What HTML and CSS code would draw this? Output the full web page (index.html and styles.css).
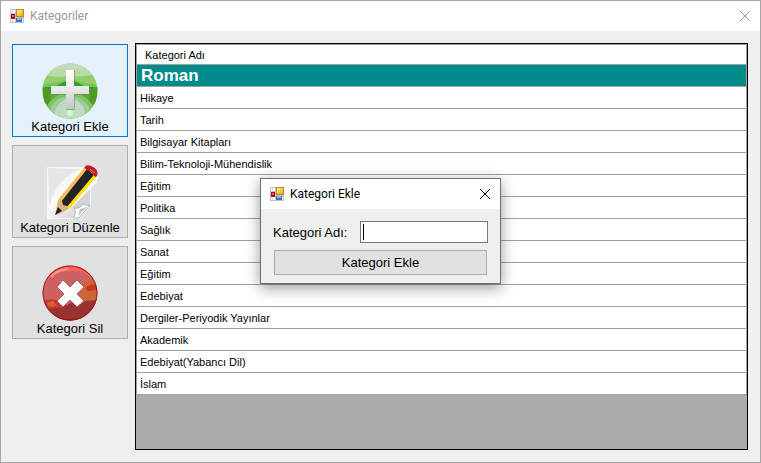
FILE: index.html
```html
<!DOCTYPE html>
<html lang="tr">
<head>
<meta charset="utf-8">
<title>Kategoriler</title>
<link rel="stylesheet" href="styles.css">
</head>
<body>
<svg class="defs" aria-hidden="true">
  <defs>
    <linearGradient id="gold" x1="0" y1="0" x2="1" y2="1"><stop offset="0" stop-color="#fff0a0"/><stop offset="1" stop-color="#f0a800"/></linearGradient>
    <linearGradient id="metal" x1="0" y1="0" x2="0" y2="1"><stop offset="0" stop-color="#ffffff"/><stop offset=".5" stop-color="#e8e8e8"/><stop offset="1" stop-color="#c4c4c4"/></linearGradient>
    <linearGradient id="paper" x1="0" y1="0" x2="1" y2="1"><stop offset="0" stop-color="#e4e4e4"/><stop offset=".4" stop-color="#fafafa"/><stop offset=".75" stop-color="#dcdcdc"/><stop offset="1" stop-color="#fff"/></linearGradient>
    <clipPath id="disc"><circle cx="28" cy="28" r="27.5"/></clipPath>
    <symbol id="form-icon" viewBox="0 0 14 14">
      <rect width="14" height="14" fill="#c3c3c3"/>
      <path d="M1 1h4v3H1zM1 10h4v3H1zM12 10h1v3h-1z" fill="#fff"/>
      <path d="M2 1h1v3H2zM2 11h1v2H2z" fill="#d8d8d8"/>
      <rect x="6" y="0" width="8" height="8" fill="#b98a1c"/>
      <rect x="7" y="1" width="6" height="6" fill="url(#gold)"/>
      <rect x="1" y="5" width="4" height="5" fill="#a01414"/>
      <rect x="2" y="6" width="2" height="2" fill="#e06050"/>
      <rect x="6" y="9" width="6" height="4" fill="#3a6fc8"/>
      <rect x="7" y="9" width="4" height="2" fill="#84b4f4"/>
    </symbol>
  </defs>
</svg>
<div class="window">
  <header class="titlebar inactive">
    <svg class="form-icon" aria-hidden="true"><use href="#form-icon"/></svg>
    <h1 class="caption">Kategoriler</h1>
    <button class="close" type="button" aria-label="Kapat"><svg viewBox="0 0 10 10" aria-hidden="true"><path d="M0 0l10 10M10 0L0 10"/></svg></button>
  </header>
  <main class="content">
    <nav class="tools">
      <button class="tool focused" type="button">
        <svg viewBox="0 0 56 56" aria-hidden="true">
          <g clip-path="url(#disc)">
            <rect width="56" height="56" fill="#8ccc62"/>
            <path d="M0 0h56v11H0z" fill="#bfdcc0"/>
            <path d="M0 6h56v2H0z" fill="#d6cfa0"/>
            <path d="M0 8h56v3q-28 6-56 1z" fill="#b4dca8"/>
            <path d="M0 12q14 5 24 1v7L0 22zM56 12q-14 5-24 1v7l24 2z" fill="#99cc66"/>
            <path d="M0 22q12-1 24-5h8q12 4 24 5v5L38 23H18L0 27z" fill="#6cc85c"/>
            <path d="M3 24l9 0 12-6h8l12 6 9 0v14H3z" fill="#339933"/>
            <path d="M0 30h12l8-4h16l8 4h12v12l-10 9H10L0 42z" fill="#66a832"/>
            <path d="M0 24l8 2q0 8 2 14l-8 2zM56 24l-8 2q0 8-2 14l8 2z" fill="#4f9a24"/>
            <ellipse cx="28" cy="54" rx="26" ry="24" fill="#7cc45e"/>
            <ellipse cx="28" cy="53" rx="21" ry="20" fill="#99cc99"/>
            <ellipse cx="28" cy="51" rx="15" ry="15" fill="#bfdcc0"/>
            <circle cx="28" cy="50" r="3" fill="#ccffcc"/>
          </g>
          <path d="M24 7h9v16h15v9H33v15h-9V32H9v-9h15z" fill="#5c8f50" opacity=".55"/>
          <path d="M24 7h8v16h15v8H32v15h-8V31H9v-8h15z" fill="url(#metal)"/>
        </svg>
        <span>Kategori Ekle</span>
      </button>
      <button class="tool" type="button">
        <svg viewBox="0 0 56 56" aria-hidden="true">
          <path d="M5.500 3.500h43v37L37.500 54.500h-32z" fill="url(#paper)" stroke="#f8f8f8"/>
          <path d="M7 5h32Q14 14 7 42z" fill="#e6e6e6"/>
          <path d="M30 43l18-22v20L37 50z" fill="#cfcfcf" opacity=".7"/>
          <path d="M31 54q4-5 1-10 6 1 9-4 3 2 7 1L37 54z" fill="#fafafa" stroke="#b4b4b4"/>
          <path d="M36 52l2-7 7-2z" fill="#c4c4c4"/>
          <path d="M45 1l11 6-1 11-28 28-14 5 3-16z" fill="#fff" opacity=".8"/>
          <path d="M16 36L43 3l12 8-28 34z" fill="#f5c518"/>
          <path d="M16 36L43 3l3 2-26 33z" fill="#ffbd5c"/>
          <path d="M19 38L45 5l7 6-27 32-4-1z" fill="#242424"/>
          <path d="M25 43L52 11l3 1-28 33z" fill="#ffe000"/>
          <path d="M16 36l4 1 1 4 4 1 2 3-10 5-4 1z" fill="#d9b77c"/>
          <path d="M16 43l4 4-7 4z" fill="#202020"/>
          <path d="M42 4q3-5 9-1 6 3 4 9l-2 1q-3-6-11-9z" fill="#cf1020"/>
          <path d="M43 2l3-1M48 5l5 4" stroke="#a4a4a4"/>
        </svg>
        <span>Kategori Düzenle</span>
      </button>
      <button class="tool" type="button">
        <svg viewBox="0 0 56 56" aria-hidden="true">
          <g clip-path="url(#disc)">
            <rect width="56" height="56" fill="#cc6262"/>
            <path d="M4 15Q12-2 28 1q16-1 24 14Q40 4 28 6 14 5 4 17z" fill="#fa6060"/>
            <path d="M9 12Q15 5 26 4" fill="none" stroke="#ff9999" stroke-width="2"/>
            <path d="M41 19q7-5 12-3l3 22-18-4z" fill="#cc6633"/>
            <path d="M43 23q6-5 11-3l1 5-9 1z" fill="#cc3333"/>
            <path d="M0 36q14-4 24 3v7H0z" fill="#cc3333"/>
            <path d="M4 38l7-2 4 5-7 1z" fill="#cc6633"/>
            <path d="M2 43q20 2 26-5 12-2 28-3v21H0z" fill="#993333"/>
            <path d="M7 50q20 8 42 0L38 56H18z" fill="#880808"/>
          </g>
          <circle cx="28" cy="28" r="27" fill="none" stroke="#a01c1c"/>
          <path d="M21 15l7 7 7-7 7 7-7 7 7 7-7 6-7-7-7 7-6-6 7-7-7-7z" fill="#fff" stroke="#a94444" stroke-width=".8"/>
        </svg>
        <span>Kategori Sil</span>
      </button>
    </nav>
    <div class="grid">
      <table>
        <thead><tr><th scope="col">Kategori Adı</th></tr></thead>
        <tbody>
          <tr class="selected"><td>Roman</td></tr>
          <tr><td>Hikaye</td></tr>
          <tr><td>Tarih</td></tr>
          <tr><td>Bilgisayar Kitapları</td></tr>
          <tr><td>Bilim-Teknoloji-Mühendislik</td></tr>
          <tr><td>Eğitim</td></tr>
          <tr><td>Politika</td></tr>
          <tr><td>Sağlık</td></tr>
          <tr><td>Sanat</td></tr>
          <tr><td>Eğitim</td></tr>
          <tr><td>Edebiyat</td></tr>
          <tr><td>Dergiler-Periyodik Yayınlar</td></tr>
          <tr><td>Akademik</td></tr>
          <tr><td>Edebiyat(Yabancı Dil)</td></tr>
          <tr><td>İslam</td></tr>
        </tbody>
      </table>
    </div>
  </main>
</div>
<section class="dialog" role="dialog" aria-labelledby="dialog-title">
  <header class="titlebar">
    <svg class="form-icon" aria-hidden="true"><use href="#form-icon"/></svg>
    <h2 class="caption" id="dialog-title">Kategori Ekle</h2>
    <button class="close" type="button" aria-label="Kapat"><svg viewBox="0 0 10 10" aria-hidden="true"><path d="M0 0l10 10M10 0L0 10"/></svg></button>
  </header>
  <form class="dialog-form">
    <div class="field">
      <label for="category-name">Kategori Adı:</label>
      <span class="textbox"><input id="category-name" type="text"><i class="caret"></i></span>
    </div>
    <button class="submit" type="button">Kategori Ekle</button>
  </form>
</section>
</body>
</html>
```
FILE: styles.css
```css
* { box-sizing: border-box; }

body {
  margin: 0;
  color: #000;
  font-family: "Liberation Sans", Arial, sans-serif;
  font-size: 13px;
}

button, input { font: inherit; color: inherit; }

.defs { position: absolute; width: 0; height: 0; }

.window {
  display: flex;
  flex-direction: column;
  min-height: 100vh;
  border: 1px solid #a6a6a6;
  background: #efefef;
}

.titlebar {
  display: flex;
  align-items: center;
  height: 30px;
  padding: 0 10px 0 9px;
  background: #fff;
}

.form-icon { width: 14px; height: 14px; shape-rendering: crispEdges; }

.caption {
  flex: 1;
  margin: 0 0 0 6px;
  font: 12px/16px Roboto, "Noto Sans", sans-serif;
}

.inactive .caption { color: #999; }

.close {
  display: flex;
  padding: 0;
  border: 0;
  background: none;
}

.close svg {
  width: 10px;
  height: 10px;
  overflow: visible;
  fill: none;
  stroke: #000;
}

.inactive .close svg { stroke: #999; }

.content {
  flex: 1;
  display: flex;
  gap: 7px;
  padding: 12px 12px 12px 11px;
}

.tools {
  display: flex;
  flex-direction: column;
  gap: 8px;
  width: 116px;
  padding-top: 1px;
}

.tool {
  display: flex;
  flex-direction: column;
  align-items: center;
  justify-content: flex-end;
  height: 93px;
  padding: 0 0 1px;
  border: 1px solid #adadad;
  background: #e1e1e1;
  line-height: 16px;
  white-space: nowrap;
}

.tool.focused {
  border-color: #0078d7;
  background: #e5f1fb;
}

.tool svg { width: 56px; height: 56px; }

.grid {
  flex: 1;
  border: 1px solid #000;
  background: #ababab;
}

table {
  width: 100%;
  border-collapse: separate;
  border-spacing: 0;
  border: 1px solid #a0a0a0;
  border-width: 0 1px;
  font-size: 11px;
}

th, td {
  height: 22px;
  padding: 0 3px;
  border-bottom: 1px solid #a0a0a0;
  background: #fff;
  font-weight: normal;
  text-align: left;
}

th {
  height: 21px;
  padding: 0 8px;
  border-top: 1px solid #a0a0a0;
}

.selected td {
  padding: 0 4px;
  background: #008b8b;
  color: #fff;
  font-size: 17px;
  font-weight: bold;
}

.dialog {
  position: absolute;
  top: 178px;
  left: 260px;
  width: 241px;
  border: 1px solid #6b706d;
  background: #efefef;
  box-shadow: 0 4px 14px rgba(0, 0, 0, .4);
}

.dialog-form {
  display: flex;
  flex-direction: column;
  gap: 7px;
  padding: 12px 12px 8px;
}

.field { display: flex; align-items: center; gap: 13px; }

.textbox { position: relative; flex: 1; display: flex; }

.textbox input {
  width: 100%;
  height: 22px;
  padding: 0 3px;
  border: 1px solid #7a7a7a;
  background: #fff;
  outline: none;
}

.caret {
  position: absolute;
  top: 3px;
  left: 3px;
  width: 1px;
  height: 16px;
  background: #000;
}

.submit {
  height: 25px;
  margin: 0 1px;
  padding: 0;
  border: 1px solid #adadad;
  background: #e1e1e1;
}
```
